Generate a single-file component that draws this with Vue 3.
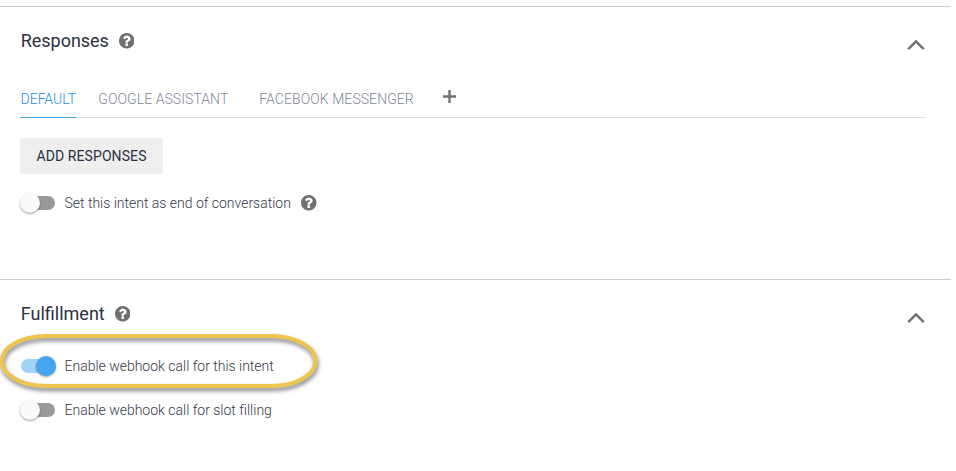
<script setup>
import { h } from 'vue'

const HelpIcon = () =>
  h('svg', { class: 'help', viewBox: '0 128 1536 1536', 'aria-hidden': 'true' }, [
    h('path', {
      d: 'M896 1376v-192q0-14-9-23t-23-9H672q-14 0-23 9t-9 23v192q0 14 9 23t23 9h192q14 0 23-9t9-23zm256-672q0-88-55.5-163T958 425t-170-41q-243 0-371 213-15 24 8 42l132 100q7 6 19 6 16 0 25-12 53-68 86-92 34-24 86-24 48 0 85.5 26t37.500 59q0 38-20 61t-68 45q-63 28-115.500 86.500T640 1020v36q0 14 9 23t23 9h192q14 0 23-9t9-23q0-19 21.500-49.500T972 957q32-18 49-28.500t46-35 44.500-48 28-60.500 12.500-81zm384 192q0 209-103 385.500T1153.500 1561 768 1664t-385.500-103T103 1281.500 0 896t103-385.500T382.500 231 768 128t385.500 103T1433 510.500 1536 896z',
    }),
  ])

const Chevron = () =>
  h('svg', { class: 'chevron', viewBox: '0 0 18 12', 'aria-hidden': 'true' }, [
    h('path', { d: 'M1.200 10.200L9 2.400l7.800 7.800' }),
  ])
</script>

<template>
  <main class="page">
    <section class="panel responses">
      <header class="head">
        <h2 class="title title-responses">Responses</h2>
        <HelpIcon />
        <Chevron />
      </header>
      <nav class="tabs">
        <a class="tab active">DEFAULT</a>
        <a class="tab assistant">GOOGLE ASSISTANT</a>
        <a class="tab messenger">FACEBOOK MESSENGER</a>
        <svg class="plus" viewBox="0 0 13 13"><path d="M6.500 0v13M0 6.500h13" /></svg>
      </nav>
      <button class="add">ADD RESPONSES</button>
      <div class="row">
        <span class="switch"></span>
        <span class="label end">Set this intent as end of conversation</span>
        <HelpIcon />
      </div>
    </section>
    <section class="panel fulfillment">
      <header class="head">
        <h2 class="title title-fulfillment">Fulfillment</h2>
        <HelpIcon />
        <Chevron />
      </header>
      <div class="row webhook">
        <span class="switch on"></span>
        <span class="label intent">Enable webhook call for this intent</span>
        <svg class="highlight" viewBox="0 0 340 80">
          <rect x="1.800" y="18" width="313.700" height="50" rx="44" ry="25" />
        </svg>
      </div>
      <div class="row slot">
        <span class="switch"></span>
        <span class="label filling">Enable webhook call for slot filling</span>
      </div>
    </section>
  </main>
</template>

<style>
body {
  margin: 0;
  background: #fff;
}
</style>

<style scoped>
.page {
  box-sizing: border-box;
  width: 956px;
  height: 471px;
  padding-top: 6px;
  overflow: hidden;
  font-family: Roboto, sans-serif;
  color: #2b303f;
}
.panel {
  box-sizing: border-box;
  width: 951px;
  padding: 19px 25px 0 20px;
  border-top: 1px solid #cfcacb;
}
.responses {
  height: 273px;
}
.head {
  display: flex;
  align-items: center;
  height: 30px;
}
.title {
  margin: 0 11px 0 0.8px;
  font-size: 18px;
  font-weight: 400;
  line-height: 30px;
  white-space: nowrap;
}
.title-responses {
  width: 87px;
  letter-spacing: -0.04px;
}
.title-fulfillment {
  width: 83px;
}
.help {
  flex: none;
  width: 15.5px;
  height: 15.5px;
  fill: #707070;
}
.chevron {
  width: 18px;
  height: 12px;
  margin: 8px 1px 0 auto;
  fill: none;
  stroke: #707070;
  stroke-width: 2.400;
}
.tabs {
  display: flex;
  box-sizing: border-box;
  height: 41px;
  margin-top: 21px;
  border-bottom: 1px solid #dedede;
}
.tab {
  box-sizing: border-box;
  height: 41px;
  font-size: 14px;
  font-weight: 300;
  line-height: 44px;
  letter-spacing: 0.07px;
  color: #808696;
  white-space: nowrap;
}
.active {
  width: 56px;
  padding-left: 0.5px;
  border-bottom: 1px solid #47a3ea;
  letter-spacing: 0;
  color: #2590e2;
}
.assistant {
  width: 131px;
  margin-left: 22.3px;
}
.messenger {
  width: 154px;
  margin-left: 30px;
}
.plus {
  width: 13px;
  height: 13px;
  margin: 13px 0 0 29.7px;
  fill: none;
  stroke: #707070;
  stroke-width: 2.400;
}
.add {
  display: block;
  width: 143px;
  height: 36px;
  margin-top: 20px;
  padding: 0;
  border: 0;
  border-radius: 2px;
  background: #eee;
  font: 400 14px/36px Roboto, sans-serif;
  letter-spacing: 0.09px;
  color: #2b303f;
  white-space: nowrap;
}
.row {
  position: relative;
  display: flex;
  align-items: center;
  height: 30px;
}
.add + .row {
  margin-top: 14px;
}
.switch {
  position: relative;
  flex: none;
  width: 34px;
  height: 14px;
  margin-left: 1px;
  border-radius: 7px;
  background: #999;
}
.switch::after {
  content: '';
  position: absolute;
  top: -3px;
  left: -1px;
  width: 20px;
  height: 20px;
  border-radius: 50%;
  background: #fafafa;
  box-shadow: 0 1px 2px rgba(0, 0, 0, 0.4);
}
.switch.on {
  background: #a3d2f7;
}
.switch.on::after {
  left: 15px;
  background: #47a5ef;
}
.label {
  margin: 0 10px 0 9.5px;
  font-size: 14px;
  font-weight: 300;
  line-height: 30px;
  letter-spacing: -0.01px;
  color: #333949;
  white-space: nowrap;
}
.end {
  width: 226.5px;
}
.webhook {
  margin-top: 22px;
}
.slot {
  margin-top: 14px;
}
.highlight {
  position: absolute;
  top: -33px;
  left: -20px;
  width: 340px;
  height: 80px;
  overflow: visible;
  fill: none;
  stroke: #eec54c;
  stroke-width: 4;
  filter: drop-shadow(1px 3px 2px rgba(0, 0, 0, 0.5));
}
</style>
